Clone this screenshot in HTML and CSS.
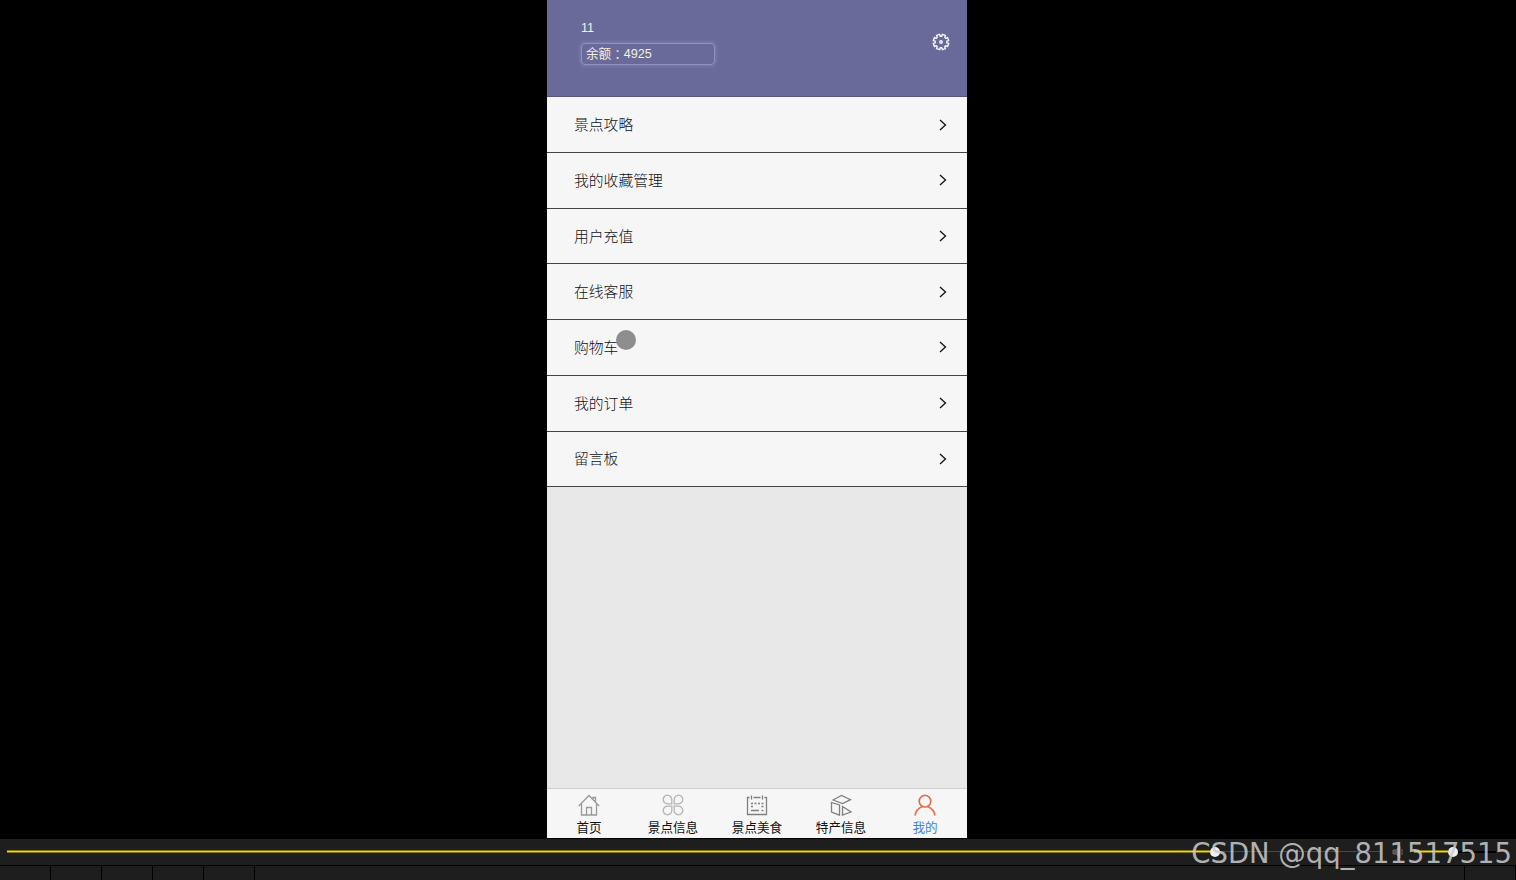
FILE: index.html
```
<!DOCTYPE html>
<html lang="zh-CN">

<head>
    <meta charset="UTF-8">
    <meta name="viewport" content="width=device-width, initial-scale=1.0">
    <title>我的</title>
    <link rel="stylesheet" href="styles.css">
</head>

<body>
    <div class="stage">
        <div class="phone">
            <header class="user">
                <div class="user-info">
                    <div class="name">11</div>
                    <div class="balance">余额<span class="colon" lang="zh-TW">：</span>4925</div>
                </div>
                <svg class="gear" viewBox="-9 -9 18 18">
                    <path d="M5.800 .8L7.700 1.400 6.600 4.500 4.700 3.700 3.700 4.700 4.500 6.600 1.400 7.700 .8 5.800H-.8L-1.400 7.700-4.500 6.600-3.700 4.700-4.700 3.700-6.600 4.500-7.700 1.400-5.800 .8V-.8L-7.700-1.400-6.600-4.500-4.700-3.700-3.700-4.700-4.500-6.600-1.400-7.700-.8-5.800H.8L1.400-7.700 4.500-6.600 3.700-4.700 4.700-3.700 6.600-4.500 7.700-1.400 5.800-.8z" />
                    <circle cx="0" cy="0" r="1.200" />
                </svg>
            </header>
            <ul class="menu">
                <li><span>景点攻略</span><svg class="arrow" viewBox="0 0 8 12"><path d="M1 1l5.500 5L1 11" /></svg></li>
                <li><span>我的收藏管理</span><svg class="arrow" viewBox="0 0 8 12"><path d="M1 1l5.500 5L1 11" /></svg></li>
                <li><span>用户充值</span><svg class="arrow" viewBox="0 0 8 12"><path d="M1 1l5.500 5L1 11" /></svg></li>
                <li><span>在线客服</span><svg class="arrow" viewBox="0 0 8 12"><path d="M1 1l5.500 5L1 11" /></svg></li>
                <li><span>购物车</span><svg class="arrow" viewBox="0 0 8 12"><path d="M1 1l5.500 5L1 11" /></svg></li>
                <li><span>我的订单</span><svg class="arrow" viewBox="0 0 8 12"><path d="M1 1l5.500 5L1 11" /></svg></li>
                <li><span>留言板</span><svg class="arrow" viewBox="0 0 8 12"><path d="M1 1l5.500 5L1 11" /></svg></li>
            </ul>
            <nav class="tabbar">
                <a class="tab">
                    <svg viewBox="0 0 22 22"><path d="M.8 12L11 1.500l10.200 10.500M15 5.500V3.500h2.500v4.500M3.500 9.500V21h15V9.500M8.500 21v-7.500h5V21" /></svg>
                    <span>首页</span>
                </a>
                <a class="tab light">
                    <svg viewBox="0 0 22 22"><path d="M9.800 9.800H5.600a4.300 4.300 0 1 1 4.200-4.200zM12.200 9.800V5.600a4.300 4.300 0 1 1 4.200 4.200zM9.800 12.200v4.200a4.300 4.300 0 1 1-4.200-4.200zM12.200 12.200h4.200a4.300 4.300 0 1 1-4.200 4.200z" /></svg>
                    <span>景点信息</span>
                </a>
                <a class="tab dark">
                    <svg viewBox="0 0 22 22"><path d="M3.500 3.500H1.500v17h19v-17h-2M7.500 3.500h7M5.500 1.500v4M16.500 1.500v4" /><path d="M5 9.500h12.500" stroke-dasharray="2 1.500" /><path d="M5 12.500h2M15.500 12.500h2M5 16.500h8M15.500 16.500h2" /></svg>
                    <span>景点美食</span>
                </a>
                <a class="tab dark">
                    <svg viewBox="0 0 22 22"><path d="M3 6L11.500 1.500 20.500 5.700 12.500 9.500zM1.500 8.500L9.500 11V21.200L1.500 18zM12.500 12.500L21 18l-8.500 3z" /></svg>
                    <span>特产信息</span>
                </a>
                <a class="tab active">
                    <svg viewBox="0 0 22 22"><circle cx="11" cy="7.200" r="5.800" /><path d="M1 21.500c.8-4.500 3.700-7.500 7.200-9M21 21.500c-.8-4.500-3.700-7.500-7.200-9" /></svg>
                    <span>我的</span>
                </a>
            </nav>
            <div class="pointer"></div>
        </div>
    </div>

    <footer class="player">
        <div class="controls">
            <div class="seek"><div class="played"></div><div class="knob"></div><div class="rest"></div></div>
            <svg class="speaker" viewBox="0 0 14 14"><path d="M1 5h3l4-4v12L4 9H1zM10 4v6" /></svg>
            <div class="volume"><div class="level"></div><div class="knob"></div><div class="rest"></div></div>
        </div>
        <div class="buttons">
            <i></i><i></i><i></i><i></i><i></i><i class="wide"></i><i class="last"></i>
        </div>
        <div class="watermark">CSDN @qq_811517515</div>
    </footer>
</body>

</html>
```

FILE: styles.css
```
*,
*::before,
*::after {
    box-sizing: border-box;
}

body {
    margin: 0;
    height: 880px;
    overflow: hidden;
    background: #000;
    color: #333;
    font-family: "Liberation Sans", "Noto Sans CJK SC", sans-serif;
}

svg {
    fill: none;
    stroke: currentColor;
}

.stage {
    display: flex;
    height: 838px;
    padding-left: 547px;
}

.phone {
    position: relative;
    display: flex;
    flex-direction: column;
    width: 420px;
    background: #e8e8e8;
}

.user {
    display: flex;
    justify-content: space-between;
    height: 97.4px;
    padding: 20px 17px 0 34px;
    background: #6a6a9a;
    border-bottom: 1px solid #55557f;
    color: #f3f0dd;
    font-size: 12.6px;
}

.name {
    height: 16px;
    margin-bottom: 7px;
    line-height: 16px;
}

.balance {
    width: 134px;
    height: 22px;
    padding-left: 4px;
    line-height: 20px;
    border: 1px solid #9292c2;
    border-radius: 4px;
    box-shadow: 0 0 4px #8c8cba;
}

.colon {
    font-family: "Noto Sans CJK TC", sans-serif;
    line-height: 1;
    vertical-align: -1px;
}

.gear {
    width: 18px;
    height: 18px;
    margin-top: 13px;
    color: #f4f4fa;
    stroke-width: 1.4;
    stroke-linejoin: round;
}

.menu {
    flex: 1;
    margin: 0;
    padding: 0;
    list-style: none;
}

.menu li {
    display: flex;
    align-items: center;
    justify-content: space-between;
    height: 55.7px;
    padding: 0 20px 0 27px;
    background: #f6f6f6;
    border-bottom: 1px solid #444;
    color: #111;
    font-size: 14.8px;
    font-weight: 300;
}

.menu span {
    padding-bottom: 2px;
}

.arrow {
    width: 8px;
    height: 12px;
    stroke-width: 1.3;
}

.tabbar {
    display: flex;
    height: 50px;
    background: #f6f6f6;
    border-top: 1px solid #cfcfcf;
}

.tab {
    flex: 1;
    display: flex;
    flex-direction: column;
    align-items: center;
    padding-top: 5px;
    color: #111;
    font-size: 12.6px;
    line-height: 18px;
    white-space: nowrap;
}

.tab svg {
    width: 22px;
    height: 22px;
    margin-bottom: 3px;
    color: #999;
    stroke-width: 1.3;
}

.tab.light svg {
    color: #b5b5b5;
}

.tab.dark svg {
    color: #808080;
}

.tab.active {
    color: #3c87d0;
}

.tab.active svg {
    color: #e2704a;
    stroke-width: 1.7;
}

/* touch point */
.pointer {
    position: absolute;
    top: 330px;
    left: 69px;
    width: 20px;
    height: 20px;
    border-radius: 50%;
    background: #8e8e8e;
}

.player {
    position: relative;
    height: 42px;
    padding-top: 1px;
}

.controls {
    display: flex;
    align-items: center;
    height: 26px;
    padding: 0 20px 1px 7px;
    background: #1e1e1e;
}

.seek,
.volume {
    display: flex;
    align-items: center;
}

.seek {
    width: 1376px;
}

.played {
    width: 1203px;
}

.played,
.level {
    height: 3px;
    background: #f0dc00;
    border: solid #85780b;
    border-width: 1px 0;
}

.knob {
    width: 10px;
    height: 10px;
    border-radius: 50%;
    background: #f0f0f0;
}

.rest {
    flex: 1;
    height: 1px;
    background: #484848;
}

.speaker {
    width: 14px;
    height: 14px;
    margin: 0 8px 0 11px;
    color: #666;
}

.speaker path {
    fill: #555;
}

.volume {
    width: 82px;
}

.level {
    width: 34px;
}

.volume .rest {
    height: 2px;
    background: #000;
}

.buttons {
    display: flex;
    height: 15px;
    border-top: 1px solid #000;
}

.buttons i {
    width: 51px;
    background: #1e1e1e;
    border-right: 1px solid #000;
}

.buttons .wide {
    flex: 1;
}

.watermark {
    position: absolute;
    top: -2px;
    right: 4px;
    color: rgba(205, 205, 205, 0.85);
    font-family: "DejaVu Sans", sans-serif;
    font-size: 27.5px;
    line-height: 35px;
    white-space: nowrap;
}
```
